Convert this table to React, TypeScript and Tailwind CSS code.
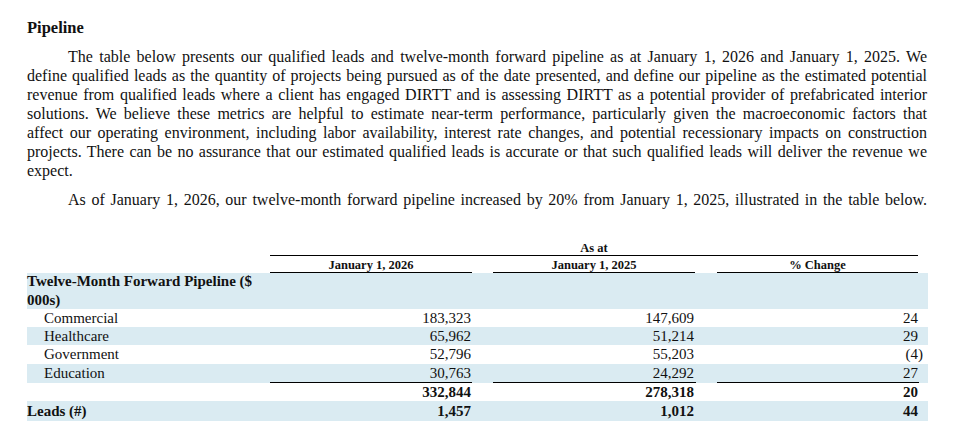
const serif = { fontFamily: '"Liberation Serif", "Times New Roman", serif' }

const paraLines = [
  "The table below presents our qualified leads and twelve-month forward pipeline as at January 1, 2026 and January 1, 2025. We",
  "define qualified leads as the quantity of projects being pursued as of the date presented, and define our pipeline as the estimated potential",
  "revenue from qualified leads where a client has engaged DIRTT and is assessing DIRTT as a potential provider of prefabricated interior",
  "solutions. We believe these metrics are helpful to estimate near-term performance, particularly given the macroeconomic factors that",
  "affect our operating environment, including labor availability, interest rate changes, and potential recessionary impacts on construction",
  "projects. There can be no assurance that our estimated qualified leads is accurate or that such qualified leads will deliver the revenue we",
]

type Row = {
  label: string
  values: [string, string, string]
  shaded: boolean
  indent?: boolean
  bold?: boolean
  underline?: boolean
  h: string
}

const rows: Row[] = [
  { label: "Commercial", values: ["183,323", "147,609", "24"], shaded: false, indent: true, h: "h-[18px]" },
  { label: "Healthcare", values: ["65,962", "51,214", "29"], shaded: true, indent: true, h: "h-[18px]" },
  { label: "Government", values: ["52,796", "55,203", "(4)"], shaded: false, indent: true, h: "h-[19px]" },
  { label: "Education", values: ["30,763", "24,292", "27"], shaded: true, indent: true, underline: true, h: "h-[19px]" },
  { label: "", values: ["332,844", "278,318", "20"], shaded: false, bold: true, h: "h-[18px]" },
  { label: "Leads (#)", values: ["1,457", "1,012", "44"], shaded: true, bold: true, h: "h-[20px]" },
]

function Value({ v }: { v: string }) {
  // accounting negatives: closing paren hangs past the column edge
  if (v.startsWith("(")) {
    return (
      <span>
        ({v.slice(1, -1)}
        <span className="inline-block w-0">)</span>
      </span>
    )
  }
  return <span>{v}</span>
}

function BodyRow({ row }: { row: Row }) {
  const cell = `flex items-center justify-end pr-[1px] ${row.underline ? "border-b border-black" : ""}`
  return (
    <div className={`flex w-[901px] ${row.h} ${row.shaded ? "bg-[#daebf2]" : ""} ${row.bold ? "font-bold" : ""}`}>
      <div className={`flex w-[243px] items-center ${row.indent ? "pl-[17px]" : ""}`}>{row.label}</div>
      <div className={`w-[202px] ${cell}`}><Value v={row.values[0]} /></div>
      <div className="w-[21px]" />
      <div className={`w-[203px] ${cell} pr-[2px]`}><Value v={row.values[1]} /></div>
      <div className="w-[21px]" />
      <div className={`w-[202px] ${cell}`}><Value v={row.values[2]} /></div>
    </div>
  )
}

export default function App() {
  return (
    <div className="min-h-[438px] w-[963px] bg-white pl-[27px] pt-[18px] text-[#111]" style={serif}>
      <h3 className="text-[16.5px] font-bold leading-[19px]">Pipeline</h3>

      <div className="mt-[10px] w-[900px] text-[16px] leading-[19px]">
        {paraLines.map((line, i) => (
          <span
            key={i}
            className={`block whitespace-nowrap text-justify [text-align-last:justify] ${i === 0 ? "pl-[41px]" : ""}`}
          >
            {line}
          </span>
        ))}
        <span className="block">expect.</span>
      </div>

      <p className="mt-[10px] w-[900px] whitespace-nowrap pl-[41px] text-[16px] leading-[19px] text-justify [text-align-last:justify]">
        As of January 1, 2026, our twelve-month forward pipeline increased by 20% from January 1, 2025, illustrated in the table below.
      </p>

      {/* Table */}
      <div className="mt-[33px] text-[15px]">
        <div className="ml-[243px] flex h-[14px] w-[648px] items-center justify-center border-b border-black text-[12.5px] font-bold leading-none">
          As at
        </div>
        <div className="flex h-[17px] text-[12.5px] font-bold leading-none">
          <div className="w-[243px]" />
          {["January 1, 2026", "January 1, 2025", "% Change"].map((h, i) => (
            <div key={h} className={`flex items-end justify-center border-b border-black pb-[1px] ${i === 0 ? "w-[202px]" : i === 1 ? "ml-[21px] w-[202px]" : "ml-[22px] w-[201px]"}`}>
              {h}
            </div>
          ))}
        </div>
        <div className="flex h-[36px] w-[901px] items-center bg-[#daebf2] font-bold leading-[19px]">
          <div className="w-[235px]">Twelve-Month Forward Pipeline ($ 000s)</div>
        </div>
        {rows.map((r, i) => (
          <BodyRow key={i} row={r} />
        ))}
      </div>
    </div>
  )
}
